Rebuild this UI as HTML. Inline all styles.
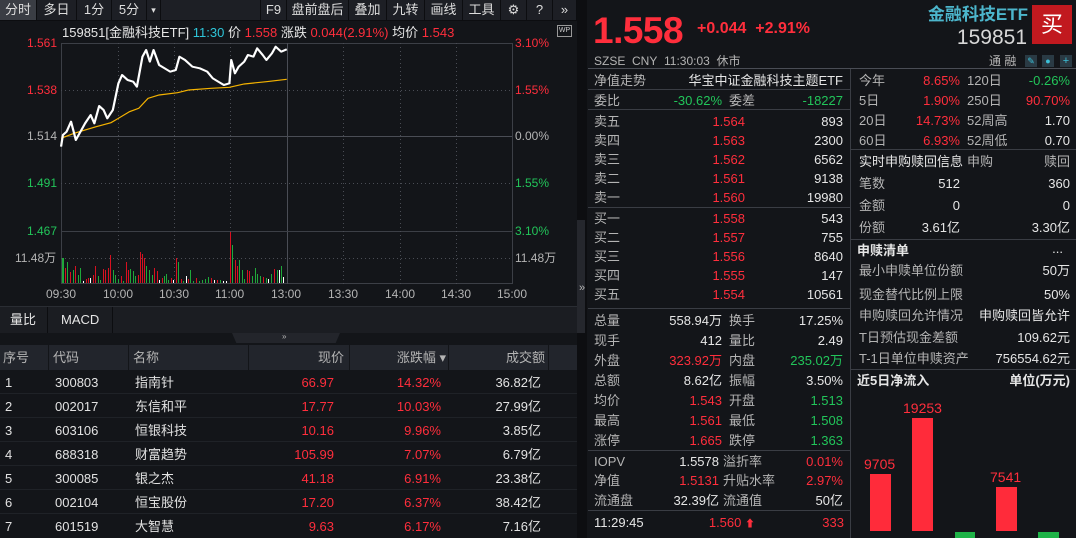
<!DOCTYPE html>
<html><head><meta charset="utf-8"><style>
*{margin:0;padding:0;box-sizing:border-box}
body{width:1076px;height:538px;background:#131519;font-family:"Liberation Sans","Noto Sans CJK SC",sans-serif;color:#e2e2e2;font-size:12px;position:relative;overflow:hidden}
.a{position:absolute;white-space:nowrap;line-height:1}
.r{color:#ff2e3c}.g{color:#22c55a}.w{color:#e6e6e6}.gy{color:#b4b4b4}
.R{text-align:right}
.hl{position:absolute;height:1px;background:#3a3d44}
.vl{position:absolute;width:1px;background:#3a3d44}
.tb{position:absolute;top:0;height:20px;line-height:20px;font-size:13px;color:#ddd;text-align:center;border-right:1px solid #0c0d10;background:#1d1f25}
</style></head><body>
<!-- toolbar -->
<div style="position:absolute;left:0;top:0;width:577px;height:21px;background:#1d1f25;border-bottom:1px solid #0c0d10"></div>
<div class="tb" style="left:0;width:37px;background:#3a3d44">分时</div>
<div class="tb" style="left:37px;width:40px">多日</div>
<div class="tb" style="left:77px;width:35px">1分</div>
<div class="tb" style="left:112px;width:35px">5分</div>
<div class="tb" style="left:147px;width:14px;font-size:9px">▾</div>
<div class="tb" style="left:161px;width:100px;border-right:1px solid #0c0d10"></div>
<div class="tb" style="left:261px;width:26px">F9</div>
<div class="tb" style="left:287px;width:62px">盘前盘后</div>
<div class="tb" style="left:349px;width:38px">叠加</div>
<div class="tb" style="left:387px;width:38px">九转</div>
<div class="tb" style="left:425px;width:38px">画线</div>
<div class="tb" style="left:463px;width:38px">工具</div>
<div class="tb" style="left:501px;width:26px">⚙</div>
<div class="tb" style="left:527px;width:26px">?</div>
<div class="tb" style="left:553px;width:24px">»</div>
<!-- info row -->
<div class="a" style="left:62px;top:26px;font-size:13px"><span class="w">159851[金融科技ETF]</span> <span style="color:#2ec5d8">11:30</span> <span class="w">价</span> <span class="r">1.558</span> <span class="w">涨跌</span> <span class="r">0.044(2.91%)</span> <span class="w">均价</span> <span class="r">1.543</span></div>
<div class="a" style="left:557px;top:25px;width:15px;height:12px;border:1px solid #999;font-size:7px;color:#ccc;text-align:center;line-height:10px">WP</div>
<!-- chart -->
<svg style="position:absolute;left:0;top:0" width="577" height="310">
<g stroke="#3c3f46" fill="none">
<rect x="61.5" y="43.5" width="451" height="240"/>
<line x1="61" y1="136.5" x2="512" y2="136.5" stroke="#4a4d55"/>
<line x1="287.5" y1="43" x2="287.5" y2="284" stroke="#4a4d55"/>
<line x1="61" y1="231.5" x2="512" y2="231.5"/>
<g stroke-dasharray="1 3" stroke="#4a4d55">
<line x1="61" y1="90.5" x2="512" y2="90.5"/><line x1="61" y1="183.5" x2="512" y2="183.5"/><line x1="61" y1="258.5" x2="512" y2="258.5"/>
<line x1="118.5" y1="43" x2="118.5" y2="284"/><line x1="174.5" y1="43" x2="174.5" y2="284"/><line x1="230.5" y1="43" x2="230.5" y2="284"/><line x1="343.5" y1="43" x2="343.5" y2="284"/><line x1="400.5" y1="43" x2="400.5" y2="284"/><line x1="456.5" y1="43" x2="456.5" y2="284"/>
</g></g>
<g transform="scale(0.37,0.3333)">
<polyline fill="none" stroke="#f5b300" stroke-width="3.5" points="165,415 200,400 260,380 300,368 320,355 350,335 375,325 400,295 430,285 480,278 510,270 570,265 620,262 660,252 720,245 775,238"/>
<polyline fill="none" stroke="#fff" stroke-width="6" stroke-linejoin="round" points="165,440 170,405 180,395 192,365 205,420 215,400 230,370 245,345 255,370 268,318 280,330 290,355 305,330 320,250 330,225 345,240 360,245 370,260 385,170 395,150 405,185 415,150 430,195 445,205 460,215 475,210 485,170 500,180 520,200 540,205 560,215 575,235 590,245 605,255 620,250 625,180 635,220 645,200 660,185 670,165 685,170 695,145 710,165 720,180 735,160 745,140 760,155 775,148"/>
</g>
<g>
<rect x="62" y="258" width="2" height="25" fill="#1fa83a"/><rect x="65" y="268" width="1" height="15" fill="#d81020"/><rect x="67" y="262" width="1" height="21" fill="#1fa83a"/><rect x="70" y="272" width="1" height="11" fill="#d81020"/><rect x="73" y="270" width="1" height="13" fill="#1fa83a"/><rect x="75" y="266" width="1" height="17" fill="#d81020"/><rect x="78" y="275" width="1" height="8" fill="#1fa83a"/><rect x="80" y="268" width="1" height="15" fill="#1fa83a"/><rect x="83" y="281" width="1" height="2" fill="#fff"/><rect x="86" y="279" width="1" height="4" fill="#d81020"/><rect x="88" y="278" width="1" height="5" fill="#d81020"/><rect x="90" y="278" width="1" height="5" fill="#fff"/><rect x="93" y="275" width="1" height="8" fill="#d81020"/><rect x="95" y="266" width="1" height="17" fill="#d81020"/><rect x="98" y="276" width="1" height="7" fill="#1fa83a"/><rect x="100" y="280" width="1" height="3" fill="#1fa83a"/><rect x="103" y="269" width="1" height="14" fill="#d81020"/><rect x="105" y="270" width="1" height="13" fill="#d81020"/><rect x="108" y="268" width="1" height="15" fill="#d81020"/><rect x="110" y="255" width="1" height="28" fill="#d81020"/><rect x="113" y="270" width="1" height="13" fill="#1fa83a"/><rect x="115" y="275" width="1" height="8" fill="#1fa83a"/><rect x="118" y="279" width="1" height="4" fill="#1fa83a"/><rect x="121" y="276" width="1" height="7" fill="#d81020"/><rect x="123" y="281" width="1" height="2" fill="#1fa83a"/><rect x="126" y="262" width="1" height="21" fill="#d81020"/><rect x="128" y="270" width="1" height="13" fill="#d81020"/><rect x="130" y="269" width="1" height="14" fill="#1fa83a"/><rect x="133" y="271" width="1" height="12" fill="#1fa83a"/><rect x="135" y="276" width="1" height="7" fill="#1fa83a"/><rect x="138" y="275" width="1" height="8" fill="#d81020"/><rect x="140" y="252" width="1" height="31" fill="#d81020"/><rect x="142" y="254" width="1" height="29" fill="#d81020"/><rect x="144" y="258" width="1" height="25" fill="#d81020"/><rect x="146" y="266" width="1" height="17" fill="#1fa83a"/><rect x="149" y="270" width="1" height="13" fill="#1fa83a"/><rect x="152" y="275" width="1" height="8" fill="#1fa83a"/><rect x="154" y="268" width="1" height="15" fill="#d81020"/><rect x="157" y="271" width="1" height="12" fill="#d81020"/><rect x="159" y="280" width="1" height="3" fill="#fff"/><rect x="162" y="278" width="1" height="5" fill="#d81020"/><rect x="164" y="276" width="1" height="7" fill="#1fa83a"/><rect x="166" y="274" width="1" height="9" fill="#1fa83a"/><rect x="168" y="280" width="1" height="3" fill="#1fa83a"/><rect x="171" y="278" width="1" height="5" fill="#d81020"/><rect x="173" y="280" width="1" height="3" fill="#fff"/><rect x="176" y="258" width="1" height="25" fill="#d81020"/><rect x="178" y="262" width="1" height="21" fill="#1fa83a"/><rect x="181" y="279" width="1" height="4" fill="#d81020"/><rect x="183" y="281" width="1" height="2" fill="#1fa83a"/><rect x="186" y="276" width="1" height="7" fill="#fff"/><rect x="188" y="279" width="1" height="4" fill="#d81020"/><rect x="190" y="270" width="1" height="13" fill="#1fa83a"/><rect x="193" y="281" width="1" height="2" fill="#1fa83a"/><rect x="196" y="278" width="1" height="5" fill="#d81020"/><rect x="199" y="281" width="1" height="2" fill="#1fa83a"/><rect x="202" y="280" width="1" height="3" fill="#1fa83a"/><rect x="205" y="279" width="1" height="4" fill="#1fa83a"/><rect x="208" y="277" width="1" height="6" fill="#1fa83a"/><rect x="211" y="278" width="1" height="5" fill="#d81020"/><rect x="214" y="280" width="1" height="3" fill="#fff"/><rect x="217" y="280" width="1" height="3" fill="#d81020"/><rect x="220" y="280" width="1" height="3" fill="#1fa83a"/><rect x="223" y="281" width="1" height="2" fill="#fff"/><rect x="226" y="281" width="1" height="2" fill="#fff"/><rect x="230" y="232" width="1" height="51" fill="#d81020"/><rect x="232" y="245" width="1" height="38" fill="#1fa83a"/><rect x="235" y="260" width="1" height="23" fill="#d81020"/><rect x="237" y="266" width="1" height="17" fill="#d81020"/><rect x="239" y="260" width="1" height="23" fill="#1fa83a"/><rect x="242" y="270" width="1" height="13" fill="#1fa83a"/><rect x="244" y="279" width="1" height="4" fill="#1fa83a"/><rect x="247" y="270" width="1" height="13" fill="#d81020"/><rect x="249" y="271" width="1" height="12" fill="#d81020"/><rect x="252" y="276" width="1" height="7" fill="#1fa83a"/><rect x="255" y="268" width="1" height="15" fill="#1fa83a"/><rect x="257" y="274" width="1" height="9" fill="#1fa83a"/><rect x="260" y="276" width="1" height="7" fill="#1fa83a"/><rect x="263" y="277" width="1" height="6" fill="#d81020"/><rect x="266" y="278" width="1" height="5" fill="#1fa83a"/><rect x="268" y="279" width="1" height="4" fill="#fff"/><rect x="271" y="274" width="1" height="9" fill="#1fa83a"/><rect x="274" y="269" width="1" height="14" fill="#d81020"/><rect x="277" y="270" width="1" height="13" fill="#1fa83a"/><rect x="279" y="270" width="1" height="13" fill="#fff"/><rect x="281" y="266" width="1" height="17" fill="#1fa83a"/><rect x="283" y="277" width="1" height="6" fill="#fff"/>
</g>
</svg>
<div class="a r" style="left:27px;top:37px;font-size:12px">1.561</div>
<div class="a r" style="left:27px;top:84px;font-size:12px">1.538</div>
<div class="a gy" style="left:27px;top:130px;font-size:12px">1.514</div>
<div class="a g" style="left:27px;top:177px;font-size:12px">1.491</div>
<div class="a g" style="left:27px;top:225px;font-size:12px">1.467</div>
<div class="a gy" style="left:15px;top:252px;font-size:12px">11.48万</div>
<div class="a r" style="left:515px;top:37px;font-size:12px">3.10%</div>
<div class="a r" style="left:515px;top:84px;font-size:12px">1.55%</div>
<div class="a gy" style="left:515px;top:130px;font-size:12px">0.00%</div>
<div class="a g" style="left:515px;top:177px;font-size:12px">1.55%</div>
<div class="a g" style="left:515px;top:225px;font-size:12px">3.10%</div>
<div class="a gy" style="left:515px;top:252px;font-size:12px">11.48万</div>
<div class="a gy" style="left:46px;top:288px;font-size:12px">09:30</div>
<div class="a gy" style="left:103px;top:288px;font-size:12px">10:00</div>
<div class="a gy" style="left:159px;top:288px;font-size:12px">10:30</div>
<div class="a gy" style="left:215px;top:288px;font-size:12px">11:00</div>
<div class="a gy" style="left:271px;top:288px;font-size:12px">13:00</div>
<div class="a gy" style="left:328px;top:288px;font-size:12px">13:30</div>
<div class="a gy" style="left:385px;top:288px;font-size:12px">14:00</div>
<div class="a gy" style="left:441px;top:288px;font-size:12px">14:30</div>
<div class="a gy" style="left:497px;top:288px;font-size:12px">15:00</div>
<!-- tabs -->
<div class="hl" style="left:0;top:306px;width:577px;background:#2a2d33"></div>
<div style="position:absolute;left:0;top:307px;width:577px;height:26px;background:#1b1d22"></div>
<div class="a w" style="left:10px;top:313px;font-size:13px">量比</div>
<div class="vl" style="left:47px;top:307px;height:26px;background:#0c0d10"></div>
<div class="a w" style="left:61px;top:313px;font-size:13px">MACD</div>
<div class="vl" style="left:112px;top:307px;height:26px;background:#0c0d10"></div>
<div style="position:absolute;left:232px;top:333px;width:108px;height:10px;background:#23252b;clip-path:polygon(0 0,100% 0,96% 100%,4% 100%)"></div>
<div class="a gy" style="left:282px;top:333px;font-size:8px">»</div>
<!-- table -->
<div style="position:absolute;left:0;top:345px;width:577px;height:25px;background:#22252c"></div>
<div class="a gy" style="left:3px;top:351px;font-size:13px">序号</div>
<div class="a gy" style="left:53px;top:351px;font-size:13px">代码</div>
<div class="a gy" style="left:133px;top:351px;font-size:13px">名称</div>
<div class="a gy R" style="left:250px;width:94px;top:351px;font-size:13px">现价</div>
<div class="a gy R" style="left:350px;width:96px;top:351px;font-size:13px">涨跌幅 ▾</div>
<div class="a gy R" style="left:450px;width:95px;top:351px;font-size:13px">成交额</div>
<div class="vl" style="left:48px;top:345px;height:25px;background:#131519"></div>
<div class="vl" style="left:128px;top:345px;height:25px;background:#131519"></div>
<div class="vl" style="left:248px;top:345px;height:25px;background:#131519"></div>
<div class="vl" style="left:349px;top:345px;height:25px;background:#131519"></div>
<div class="vl" style="left:448px;top:345px;height:25px;background:#131519"></div>
<div class="vl" style="left:548px;top:345px;height:25px;background:#131519"></div>
<div style="position:absolute;left:0;top:370px;width:577px;font-size:13px">
<div style="position:relative;height:24px;border-bottom:1px solid #1f2227"><span class="a" style="left:5px;top:6px">1</span><span class="a" style="left:55px;top:6px">300803</span><span class="a" style="left:135px;top:6px">指南针</span><span class="a r R" style="left:250px;width:84px;top:6px">66.97</span><span class="a r R" style="left:350px;width:91px;top:6px">14.32%</span><span class="a R" style="left:450px;width:91px;top:6px">36.82亿</span></div>
<div style="position:relative;height:24px;border-bottom:1px solid #1f2227"><span class="a" style="left:5px;top:6px">2</span><span class="a" style="left:55px;top:6px">002017</span><span class="a" style="left:135px;top:6px">东信和平</span><span class="a r R" style="left:250px;width:84px;top:6px">17.77</span><span class="a r R" style="left:350px;width:91px;top:6px">10.03%</span><span class="a R" style="left:450px;width:91px;top:6px">27.99亿</span></div>
<div style="position:relative;height:24px;border-bottom:1px solid #1f2227"><span class="a" style="left:5px;top:6px">3</span><span class="a" style="left:55px;top:6px">603106</span><span class="a" style="left:135px;top:6px">恒银科技</span><span class="a r R" style="left:250px;width:84px;top:6px">10.16</span><span class="a r R" style="left:350px;width:91px;top:6px">9.96%</span><span class="a R" style="left:450px;width:91px;top:6px">3.85亿</span></div>
<div style="position:relative;height:24px;border-bottom:1px solid #1f2227"><span class="a" style="left:5px;top:6px">4</span><span class="a" style="left:55px;top:6px">688318</span><span class="a" style="left:135px;top:6px">财富趋势</span><span class="a r R" style="left:250px;width:84px;top:6px">105.99</span><span class="a r R" style="left:350px;width:91px;top:6px">7.07%</span><span class="a R" style="left:450px;width:91px;top:6px">6.79亿</span></div>
<div style="position:relative;height:24px;border-bottom:1px solid #1f2227"><span class="a" style="left:5px;top:6px">5</span><span class="a" style="left:55px;top:6px">300085</span><span class="a" style="left:135px;top:6px">银之杰</span><span class="a r R" style="left:250px;width:84px;top:6px">41.18</span><span class="a r R" style="left:350px;width:91px;top:6px">6.91%</span><span class="a R" style="left:450px;width:91px;top:6px">23.38亿</span></div>
<div style="position:relative;height:24px;border-bottom:1px solid #1f2227"><span class="a" style="left:5px;top:6px">6</span><span class="a" style="left:55px;top:6px">002104</span><span class="a" style="left:135px;top:6px">恒宝股份</span><span class="a r R" style="left:250px;width:84px;top:6px">17.20</span><span class="a r R" style="left:350px;width:91px;top:6px">6.37%</span><span class="a R" style="left:450px;width:91px;top:6px">38.42亿</span></div>
<div style="position:relative;height:24px"><span class="a" style="left:5px;top:6px">7</span><span class="a" style="left:55px;top:6px">601519</span><span class="a" style="left:135px;top:6px">大智慧</span><span class="a r R" style="left:250px;width:84px;top:6px">9.63</span><span class="a r R" style="left:350px;width:91px;top:6px">6.17%</span><span class="a R" style="left:450px;width:91px;top:6px">7.16亿</span></div>
</div>
<!-- separator -->
<div style="position:absolute;left:577px;top:0;width:10px;height:538px;background:#0d0e11"></div>
<div style="position:absolute;left:577px;top:220px;width:8px;height:113px;background:#25272d"></div>
<div class="a gy" style="left:579px;top:283px;font-size:11px">»</div>
<!-- right header -->
<div class="a r" style="left:593px;top:12px;font-size:37px;font-weight:bold;letter-spacing:-0.5px">1.558</div>
<div class="a r" style="left:697px;top:21px;font-size:16px;font-weight:bold">+0.044&nbsp;&nbsp;+2.91%</div>
<div class="a" style="left:900px;width:128px;text-align:right;top:6px;font-size:17px;font-weight:bold;color:#4cb6cc">金融科技ETF</div>
<div class="a" style="left:900px;width:127px;text-align:right;top:27px;font-size:21px;color:#d8d8d8">159851</div>
<div style="position:absolute;left:1032px;top:5px;width:40px;height:39px;background:#c1191f;color:#fff;font-size:22px;text-align:center;line-height:39px">买</div>
<div class="a gy" style="left:594px;top:55px;font-size:12px">SZSE&nbsp;&nbsp;CNY&nbsp;&nbsp;11:30:03&nbsp;&nbsp;休市</div>
<div class="a gy" style="left:989px;top:55px;font-size:12px">通&nbsp;融</div>
<div style="position:absolute;left:1025px;top:55px;width:12px;height:12px;background:#2a3a44;color:#3cc0d8;font-size:9px;text-align:center;line-height:12px">✎</div>
<div style="position:absolute;left:1042px;top:55px;width:12px;height:12px;background:#2a3a44;color:#3cc0d8;font-size:9px;text-align:center;line-height:12px">●</div>
<div style="position:absolute;left:1060px;top:55px;width:12px;height:12px;background:#2a3a44;color:#3cc0d8;font-size:11px;text-align:center;line-height:12px">+</div>
<div class="hl" style="left:588px;top:68px;width:488px;background:#4a4d55"></div>
<div class="vl" style="left:850px;top:69px;height:469px;background:#3a3d44"></div>
<!-- middle panel -->
<div style="position:absolute;left:588px;top:69px;width:262px;font-size:13px">
<div class="a gy" style="left:6px;top:5px">净值走势</div><div class="a w R" style="left:100px;width:155px;top:5px">华宝中证金融科技主题ETF</div>
<div class="hl" style="left:0;top:20px;width:262px"></div>
<div class="a gy" style="left:6px;top:25px">委比</div><div class="a g R" style="left:50px;width:84px;top:25px">-30.62%</div><div class="a gy" style="left:141px;top:25px">委差</div><div class="a g R" style="left:170px;width:85px;top:25px">-18227</div>
<div class="hl" style="left:0;top:40px;width:262px"></div>
</div>
<div style="position:absolute;left:588px;top:0;width:262px;font-size:13px">
<div class="a gy" style="left:6px;top:115px">卖五</div><div class="a r R" style="left:80px;width:77px;top:115px">1.564</div><div class="a w R" style="left:170px;width:85px;top:115px">893</div>
<div class="a gy" style="left:6px;top:134px">卖四</div><div class="a r R" style="left:80px;width:77px;top:134px">1.563</div><div class="a w R" style="left:170px;width:85px;top:134px">2300</div>
<div class="a gy" style="left:6px;top:153px">卖三</div><div class="a r R" style="left:80px;width:77px;top:153px">1.562</div><div class="a w R" style="left:170px;width:85px;top:153px">6562</div>
<div class="a gy" style="left:6px;top:172px">卖二</div><div class="a r R" style="left:80px;width:77px;top:172px">1.561</div><div class="a w R" style="left:170px;width:85px;top:172px">9138</div>
<div class="a gy" style="left:6px;top:191px">卖一</div><div class="a r R" style="left:80px;width:77px;top:191px">1.560</div><div class="a w R" style="left:170px;width:85px;top:191px">19980</div>
<div class="hl" style="left:0;top:207px;width:262px"></div>
<div class="a gy" style="left:6px;top:212px">买一</div><div class="a r R" style="left:80px;width:77px;top:212px">1.558</div><div class="a w R" style="left:170px;width:85px;top:212px">543</div>
<div class="a gy" style="left:6px;top:231px">买二</div><div class="a r R" style="left:80px;width:77px;top:231px">1.557</div><div class="a w R" style="left:170px;width:85px;top:231px">755</div>
<div class="a gy" style="left:6px;top:250px">买三</div><div class="a r R" style="left:80px;width:77px;top:250px">1.556</div><div class="a w R" style="left:170px;width:85px;top:250px">8640</div>
<div class="a gy" style="left:6px;top:269px">买四</div><div class="a r R" style="left:80px;width:77px;top:269px">1.555</div><div class="a w R" style="left:170px;width:85px;top:269px">147</div>
<div class="a gy" style="left:6px;top:288px">买五</div><div class="a r R" style="left:80px;width:77px;top:288px">1.554</div><div class="a w R" style="left:170px;width:85px;top:288px">10561</div>
<div class="hl" style="left:0;top:308px;width:262px"></div>
<div class="a gy" style="left:6px;top:314px">总量</div><div class="a w R" style="left:50px;width:84px;top:314px">558.94万</div><div class="a gy" style="left:141px;top:314px">换手</div><div class="a w R" style="left:170px;width:85px;top:314px">17.25%</div>
<div class="a gy" style="left:6px;top:334px">现手</div><div class="a w R" style="left:50px;width:84px;top:334px">412</div><div class="a gy" style="left:141px;top:334px">量比</div><div class="a w R" style="left:170px;width:85px;top:334px">2.49</div>
<div class="a gy" style="left:6px;top:354px">外盘</div><div class="a r R" style="left:50px;width:84px;top:354px">323.92万</div><div class="a gy" style="left:141px;top:354px">内盘</div><div class="a g R" style="left:170px;width:85px;top:354px">235.02万</div>
<div class="a gy" style="left:6px;top:374px">总额</div><div class="a w R" style="left:50px;width:84px;top:374px">8.62亿</div><div class="a gy" style="left:141px;top:374px">振幅</div><div class="a w R" style="left:170px;width:85px;top:374px">3.50%</div>
<div class="a gy" style="left:6px;top:394px">均价</div><div class="a r R" style="left:50px;width:84px;top:394px">1.543</div><div class="a gy" style="left:141px;top:394px">开盘</div><div class="a g R" style="left:170px;width:85px;top:394px">1.513</div>
<div class="a gy" style="left:6px;top:414px">最高</div><div class="a r R" style="left:50px;width:84px;top:414px">1.561</div><div class="a gy" style="left:141px;top:414px">最低</div><div class="a g R" style="left:170px;width:85px;top:414px">1.508</div>
<div class="a gy" style="left:6px;top:434px">涨停</div><div class="a r R" style="left:50px;width:84px;top:434px">1.665</div><div class="a gy" style="left:141px;top:434px">跌停</div><div class="a g R" style="left:170px;width:85px;top:434px">1.363</div>
<div class="hl" style="left:0;top:450px;width:262px"></div>
<div class="a gy" style="left:6px;top:455px">IOPV</div><div class="a w R" style="left:50px;width:81px;top:455px">1.5578</div><div class="a gy" style="left:135px;top:455px">溢折率</div><div class="a r R" style="left:170px;width:85px;top:455px">0.01%</div>
<div class="a gy" style="left:6px;top:474px">净值</div><div class="a r R" style="left:50px;width:81px;top:474px">1.5131</div><div class="a gy" style="left:135px;top:474px">升贴水率</div><div class="a r R" style="left:170px;width:85px;top:474px">2.97%</div>
<div class="a gy" style="left:6px;top:494px">流通盘</div><div class="a w R" style="left:50px;width:81px;top:494px">32.39亿</div><div class="a gy" style="left:135px;top:494px">流通值</div><div class="a w R" style="left:170px;width:85px;top:494px">50亿</div>
<div class="hl" style="left:0;top:510px;width:262px"></div>
<div class="a w" style="left:6px;top:516px">11:29:45</div><div class="a r R" style="left:80px;width:87px;top:516px">1.560 <span style="font-size:10px">⬆</span></div><div class="a r R" style="left:170px;width:86px;top:516px">333</div>
</div>
<!-- right panel -->
<div style="position:absolute;left:851px;top:0;width:225px;font-size:13px">
<div class="a gy" style="left:8px;top:74px">今年</div><div class="a r R" style="left:50px;width:59px;top:74px">8.65%</div><div class="a gy" style="left:116px;top:74px">120日</div><div class="a g R" style="left:150px;width:69px;top:74px">-0.26%</div>
<div class="a gy" style="left:8px;top:94px">5日</div><div class="a r R" style="left:50px;width:59px;top:94px">1.90%</div><div class="a gy" style="left:116px;top:94px">250日</div><div class="a r R" style="left:150px;width:69px;top:94px">90.70%</div>
<div class="a gy" style="left:8px;top:114px">20日</div><div class="a r R" style="left:50px;width:59px;top:114px">14.73%</div><div class="a gy" style="left:116px;top:114px">52周高</div><div class="a w R" style="left:150px;width:69px;top:114px">1.70</div>
<div class="a gy" style="left:8px;top:134px">60日</div><div class="a r R" style="left:50px;width:59px;top:134px">6.93%</div><div class="a gy" style="left:116px;top:134px">52周低</div><div class="a w R" style="left:150px;width:69px;top:134px">0.70</div>
<div class="hl" style="left:0;top:149px;width:225px"></div>
<div class="a w" style="left:8px;top:155px">实时申购赎回信息</div><div class="a gy" style="left:116px;top:155px">申购</div><div class="a gy R" style="left:150px;width:69px;top:155px">赎回</div>
<div class="a gy" style="left:8px;top:177px">笔数</div><div class="a w R" style="left:50px;width:59px;top:177px">512</div><div class="a w R" style="left:150px;width:69px;top:177px">360</div>
<div class="a gy" style="left:8px;top:199px">金额</div><div class="a w R" style="left:50px;width:59px;top:199px">0</div><div class="a w R" style="left:150px;width:69px;top:199px">0</div>
<div class="a gy" style="left:8px;top:221px">份额</div><div class="a w R" style="left:50px;width:59px;top:221px">3.61亿</div><div class="a w R" style="left:150px;width:69px;top:221px">3.30亿</div>
<div class="hl" style="left:0;top:239px;width:225px"></div>
<div class="a w" style="left:6px;top:244px;font-weight:bold">申赎清单</div><div class="a w R" style="left:150px;width:62px;top:242px">...</div>
<div class="a gy" style="left:8px;top:264px">最小申赎单位份额</div><div class="a w R" style="left:120px;width:99px;top:264px">50万</div>
<div class="a gy" style="left:8px;top:288px">现金替代比例上限</div><div class="a w R" style="left:120px;width:99px;top:288px">50%</div>
<div class="a gy" style="left:8px;top:309px">申购赎回允许情况</div><div class="a w R" style="left:120px;width:99px;top:309px">申购赎回皆允许</div>
<div class="a gy" style="left:8px;top:331px">T日预估现金差额</div><div class="a w R" style="left:120px;width:99px;top:331px">109.62元</div>
<div class="a gy" style="left:8px;top:352px">T-1日单位申赎资产</div><div class="a w R" style="left:120px;width:99px;top:352px">756554.62元</div>
<div class="hl" style="left:0;top:369px;width:225px"></div>
<div class="a w" style="left:6px;top:374px;font-weight:bold">近5日净流入</div><div class="a w R" style="left:120px;width:99px;top:374px;font-weight:bold">单位(万元)</div>
<div style="position:absolute;left:19px;top:474px;width:21px;height:57px;background:#ff2b3a"></div>
<div style="position:absolute;left:61px;top:418px;width:21px;height:113px;background:#ff2b3a"></div>
<div style="position:absolute;left:104px;top:532px;width:20px;height:6px;background:#1fb348"></div>
<div style="position:absolute;left:145px;top:487px;width:21px;height:44px;background:#ff2b3a"></div>
<div style="position:absolute;left:187px;top:532px;width:21px;height:6px;background:#1fb348"></div>
<div class="a r" style="left:13px;top:457px;font-size:14px">9705</div>
<div class="a r" style="left:52px;top:401px;font-size:14px">19253</div>
<div class="a r" style="left:139px;top:470px;font-size:14px">7541</div>
</div>
</body></html>
